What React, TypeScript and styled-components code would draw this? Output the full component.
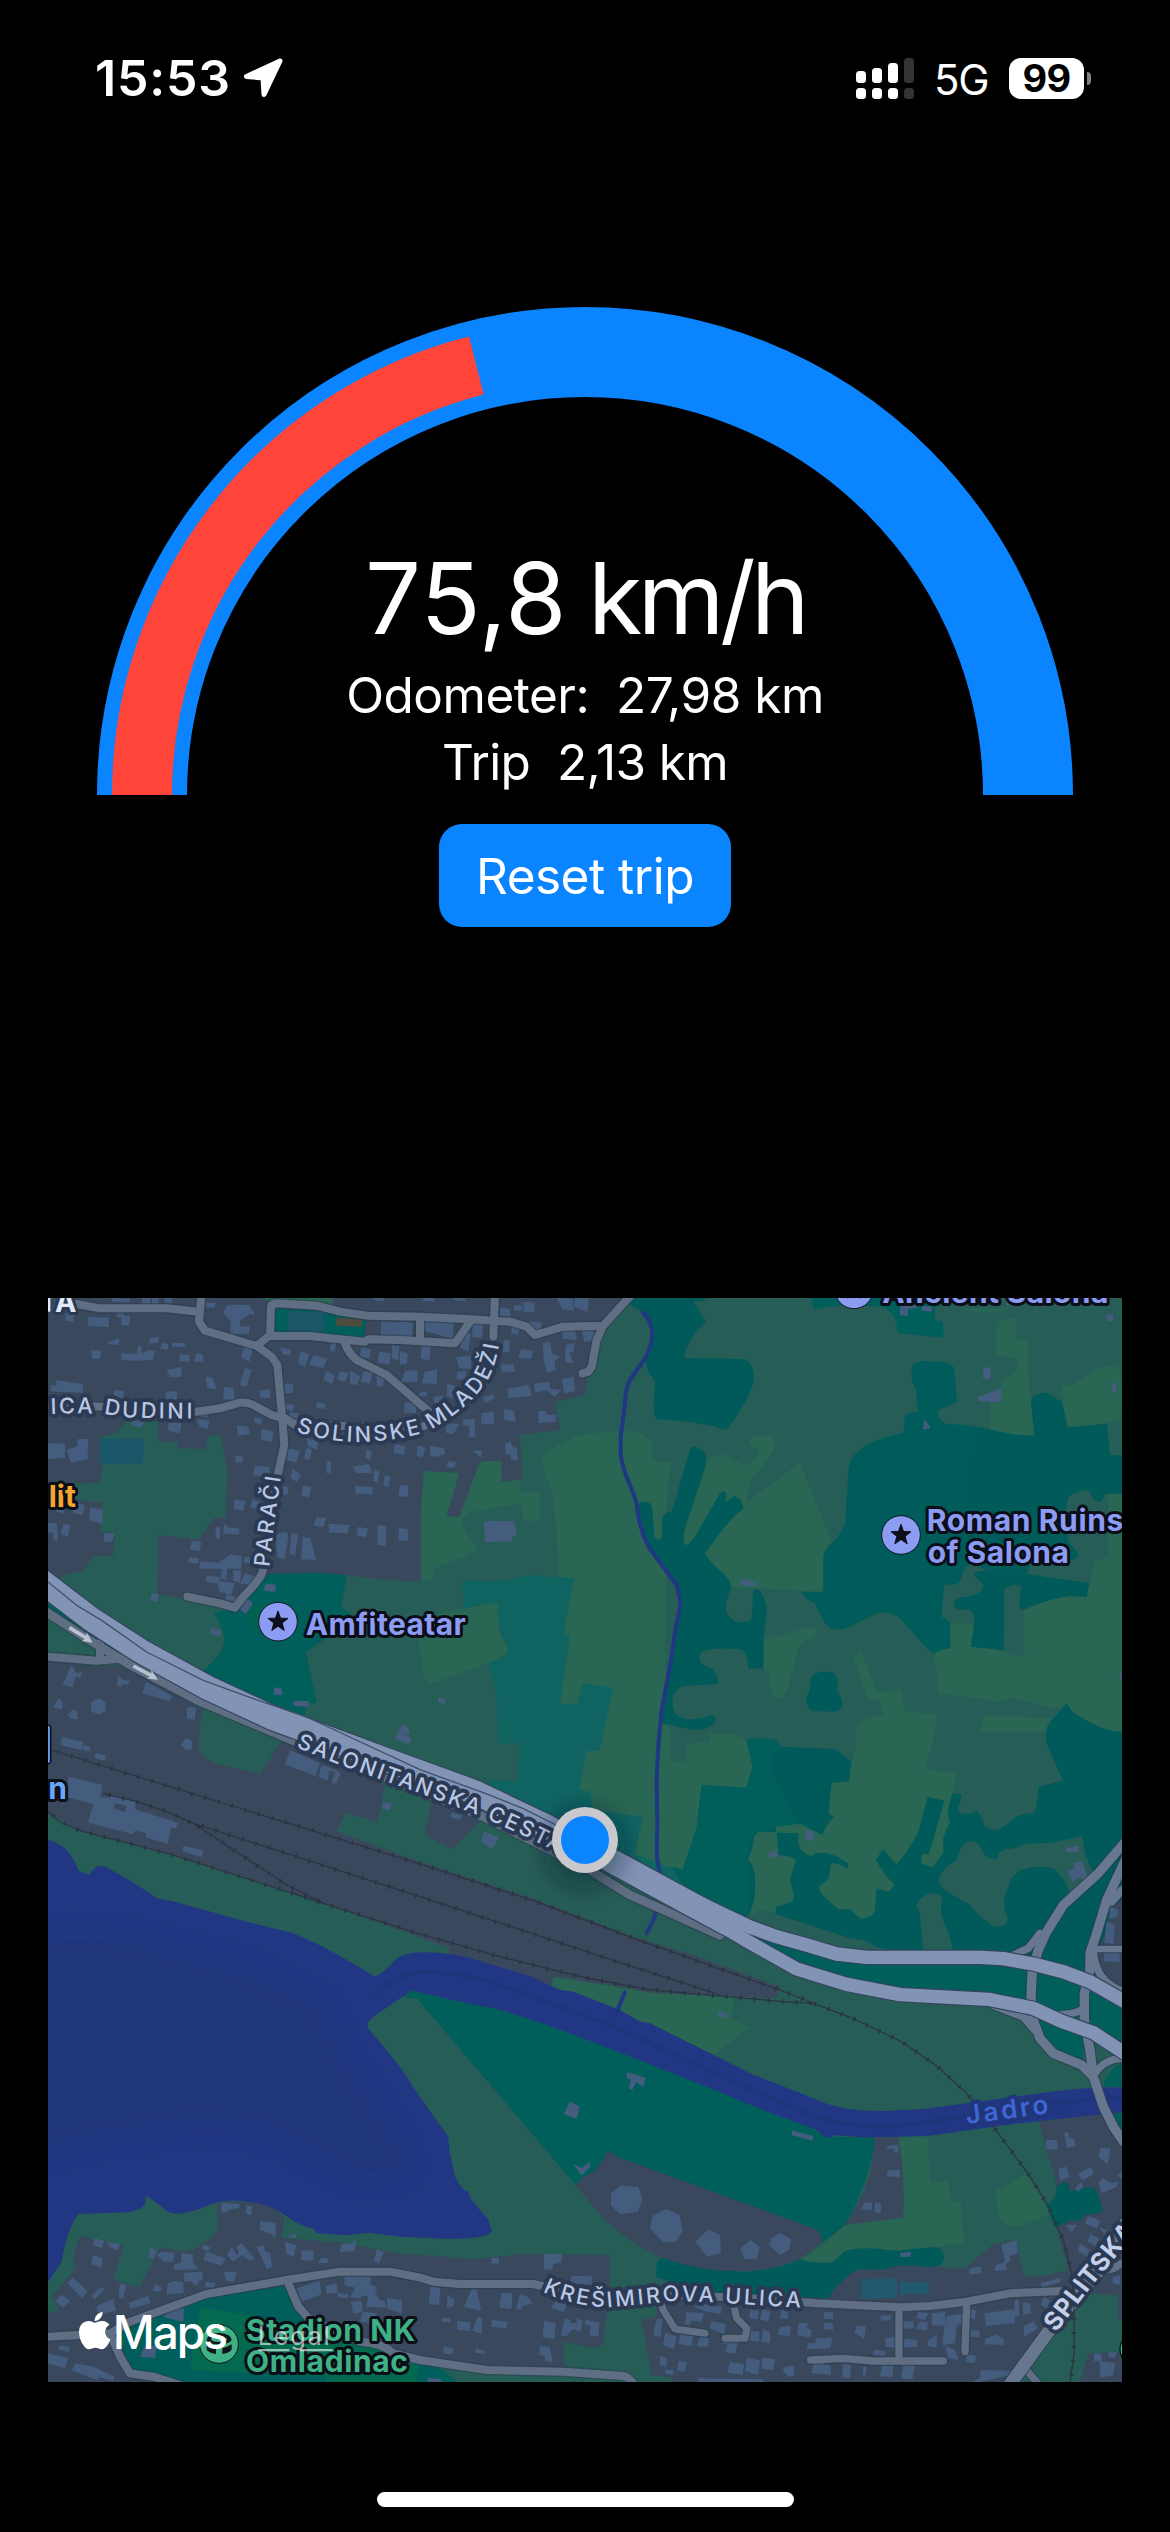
import React from 'react';
import styled, { createGlobalStyle } from 'styled-components';
import { FaApple } from 'react-icons/fa';

const GlobalStyle = createGlobalStyle`
  body { margin: 0; background: #000; }
  * { box-sizing: border-box; }
`;

const sans = `Inter, "Liberation Sans", sans-serif`;

const Screen = styled.main`
  width: 1170px;
  height: 2532px;
  overflow: hidden;
  background: #000;
  color: #fff;
  font-family: ${sans};
  display: flex;
  flex-direction: column;
  align-items: center;
`;

/* ---------- status bar ---------- */
const StatusBar = styled.header`
  width: 100%;
  height: 156px;
  padding: 0 79px 0 95px;
  display: flex;
  align-items: center;
  justify-content: space-between;
`;
const StatusGroup = styled.div`
  display: flex;
  align-items: center;
`;
const Clock = styled.span`
  font-size: 50px;
  font-weight: 600;
  line-height: 60px;
  letter-spacing: 0.8px;
  width: 148px;
  white-space: nowrap;
`;
const Signal = styled.div`
  display: grid;
  grid-template-columns: repeat(4, 10px);
  grid-template-rows: 25px 11px;
  gap: 5px 6px;
  align-items: end;
  margin-right: 20px;
`;
const SignalBar = styled.i<{ $h: number; $off?: boolean }>`
  display: block;
  height: ${(p) => p.$h}px;
  border-radius: 3.5px;
  background: ${(p) => (p.$off ? '#333' : '#fff')};
`;
const Network = styled.span`
  font-size: 42px;
  line-height: 50px;
  letter-spacing: -1.2px;
  width: 55px;
  margin-right: 20px;
  padding-top: 3px;
`;
const Battery = styled.div`
  display: flex;
  align-items: center;
  gap: 3px;
`;
const BatteryBody = styled.div`
  width: 75px;
  height: 41px;
  border-radius: 12px;
  background: #fff;
  color: #000;
  font-size: 38px;
  font-weight: 700;
  line-height: 41px;
  letter-spacing: -0.8px;
  text-align: center;
`;
const BatteryTip = styled.div`
  width: 4px;
  height: 13px;
  border-radius: 0 5px 5px 0;
  background: #808080;
`;

/* ---------- speedometer ---------- */
const Dial = styled.section`
  display: grid;
  width: 976px;
  height: 488px;
  margin-top: 151px;
  & > * { grid-area: 1 / 1; }
`;
const Readout = styled.div`
  align-self: end;
  justify-self: center;
  display: flex;
  flex-direction: column;
  align-items: center;
`;
const Speed = styled.div`
  font-size: 99px;
  line-height: 120px;
  letter-spacing: 0.4px;
  word-spacing: -7px;
  white-space: pre;
  margin-bottom: 4px;
`;
const Unit = styled.span`
  letter-spacing: -4.6px;
`;
const Metric = styled.div<{ $track: number }>`
  font-size: 49.5px;
  line-height: 66.5px;
  letter-spacing: ${(p) => p.$track}px;
  white-space: pre;
`;
const ResetButton = styled.button`
  margin: 29px 0 0;
  width: 292px;
  height: 103px;
  border: 0;
  border-radius: 23px;
  background: #0a84ff;
  color: #fff;
  font-family: ${sans};
  font-size: 49.5px;
  letter-spacing: -0.5px;
  padding: 0;
`;

/* ---------- map ---------- */
const MapFrame = styled.section`
  margin-top: 371px;
  width: 1074px;
  height: 1084px;
  overflow: hidden;
  & > svg { display: block; }
`;
const HomeIndicator = styled.div`
  margin-top: 110px;
  width: 417px;
  height: 15px;
  border-radius: 8px;
  background: #fff;
`;

const StreetText = styled.text<{ $size?: number; $weight?: number; $color?: string; $halo?: string }>`
  font-family: ${sans};
  font-size: ${(p) => p.$size ?? 65}px;
  font-weight: ${(p) => p.$weight ?? 500};
  fill: ${(p) => p.$color ?? '#b9c7e6'};
  stroke: ${(p) => p.$halo ?? '#2b3a52'};
  stroke-width: 24px;
  stroke-linejoin: round;
  paint-order: stroke;
`;
const PlaceText = styled.text<{ $color: string; $size?: number; $halo?: string }>`
  font-family: ${sans};
  font-size: ${(p) => p.$size ?? 90}px;
  font-weight: 700;
  fill: ${(p) => p.$color};
  stroke: ${(p) => p.$halo ?? '#0c0e17'};
  stroke-width: 18px;
  stroke-linejoin: round;
  paint-order: stroke;
`;
const BrandText = styled.text<{ $size: number; $alpha?: number; $weight?: number }>`
  font-family: ${sans};
  font-size: ${(p) => p.$size}px;
  font-weight: ${(p) => p.$weight ?? 400};
  fill: #fff;
  fill-opacity: ${(p) => p.$alpha ?? 1};
`;

const GREEN = '#275d57';
const LIGHT = '#296654';
const TEAL = '#005a5a';
const PARK = '#005e5b';
const GARDEN = '#0f6462';
const URBAN = '#39485c';
const WATER = '#213783';
const DEEP = '#1f3579';
const BLOCK = '#445d7e';
const ROAD = '#5f6e83';
const RAMP = '#67778f';
const HIGHWAY = '#8294b6';

type Sector = 'nw' | 'n' | 'ne' | 'w' | 'c' | 'e' | 'sw' | 's' | 'se';
const origin: Record<Sector, [number, number]> = {
  nw: [0, 0], n: [1080, 0], ne: [2130, 0],
  w: [0, 1080], c: [1080, 1080], e: [2130, 1080],
  sw: [0, 2160], s: [1080, 2160], se: [2130, 2160],
};
const At = ({ s, children }: { s: Sector; children: React.ReactNode }) => (
  <g transform={`translate(${origin[s][0]} ${origin[s][1]})`}>{children}</g>
);

type Area = [Sector, string, string];

const land: Area[] = [
  ['nw', URBAN, 'M24 0H1770L1680 120L1645 255L1633 315L1545 337L1560 420L1440 435L1445 567L1385 577L1383 512L1320 515L1258 680H1218L1258 549L1152 543L1143 660V870L1105 876L1000 865L920 855L830 848L685 852L600 950L570 955L430 925L352 912L354 736L478 748L520 685L557 681L562 540L543 438L505 436L498 477L415 475L410 457L354 453V392H262L225 430L183 440L186 525Q184 578 170 578L100 580L24 590Z'],
  ['nw', URBAN, 'M24 632L110 630L186 637L182 725L225 730L220 798H160L130 843Q90 845 65 862L24 880Z'],
  ['nw', LIGHT, 'M665 24H878V46L690 36Z'],
  ['nw', PARK, 'M705 55L835 62L980 88L972 143L700 125Z'],
  ['nw', '#1a5568', 'M745 63L852 66L850 128L742 122Z'],
  ['nw', '#4f4c3e', 'M890 83L966 88L964 111L888 107Z'],
  ['nw', '#1a5669', 'M178 445L311 447L309 522L178 520Z'],
  ['nw', PARK, 'M685 852L830 848L920 855L903 955Q930 960 935 990L798 1087L830 1238L805 1240L793 1275L700 1260L480 1150Q530 1110 545 1080Q555 1045 555 1045L545 1015L522 968L600 950Z'],
  ['nw', '#006150', 'M620 985Q630 930 700 935L780 960Q790 1030 730 1040Q640 1040 620 985Z'],
  ['nw', PARK, 'M24 935L330 1140L290 1140L24 965Z'],
  ['n', LIGHT, 'M72 543L178 549L138 680H178L240 515L303 512L305 577L360 569V608H418V690L372 696L360 640L210 667Q190 672 185 700L232 782L120 828Q98 838 98 868L63 870V660Z'],
  ['n', LIGHT, 'M425 493L530 437L610 425L690 422Q755 440 755 460V500Q758 513 770 513L812 515L800 640L795 1290L812 1312L815 1412L855 1417L862 1362L925 1355L930 1332Q1000 1325 1040 1350L1058 1440L1040 1493L905 1485L890 1615L848 1740L780 1750L680 1700L470 1590L490 1030L522 865L474 860L470 720L455 600Q430 550 425 493Z'],
  ['n', GARDEN, 'M186 870Q300 880 340 865Q400 850 450 860L522 865L490 1030L510 1035L480 1240L530 1245L548 1180L640 1193L598 1383H560L537 1498L573 1507L577 1565H625L728 1580L705 1693L830 1740L860 1790L780 1750L470 1590L260 1490L268 1470L352 1475L360 1358L295 1362L290 1230Q285 1170 265 1120L295 1100Q330 1080 322 1070Q285 1010 295 940Q270 935 193 957Z'],
  ['n', LIGHT, 'M120 970L193 957L270 940H295Q285 1010 322 1070Q330 1100 250 1125L100 1180Q75 1185 70 1150L55 1050Z'],
  ['n', TEAL, 'M680 24H920Q915 35 880 35L918 95Q860 150 852 204L1030 207Q1060 215 1062 265Q1055 320 980 420Q880 390 770 388Q755 375 765 290Q765 265 750 255L735 215L760 130L750 95L728 65L680 38Z'],
  ['n', LIGHT, 'M918 510Q950 490 980 495Q1020 525 1045 525Q1080 500 1075 480Q1045 465 1048 450Q1070 432 1110 435Q1130 440 1120 480Q1090 530 1050 575Q1040 600 1043 635L1200 518L1295 755Q1270 770 1272 800L1268 905L1140 898L995 893L915 790L850 790L840 700Z'],
  ['n', TEAL, 'M712 640Q755 625 757 660L763 740Q775 755 787 740V685Q790 668 815 665L850 545L870 480Q880 455 915 490Q925 510 910 550L860 700Q845 745 855 765Q870 765 885 740L960 610Q975 595 980 615L975 635L1005 618Q1030 630 1030 655Q985 690 915 790Q930 820 970 850Q990 870 995 893Q975 930 978 960Q985 990 1020 997Q1055 995 1055 980L1060 900Q1075 890 1085 910Q1105 950 1100 970L1090 1050L1092 1135L1045 1137Q1042 1085 1020 1078Q960 1072 920 1080Q890 1090 900 1115Q910 1128 935 1135Q960 1160 952 1182L850 1188Q815 1200 818 1250Q825 1290 880 1288Q930 1280 935 1275Q950 1280 948 1293Q930 1320 880 1320L785 1300L800 1200L830 980L840 940L825 885L740 770L715 690Z'],
  ['n', GREEN, 'M785 1300L812 1312L815 1412L855 1417L862 1362L925 1355L930 1325L880 1320Z'],
  ['n', LIGHT, 'M1092 1047L1230 1012Q1260 1020 1245 1040L1205 1055L1190 1090L1165 1195Q1140 1250 1115 1205L1105 1150L1090 1137Z'],
  ['ne', PARK, 'M183 24L192 60Q230 48 300 45L400 50Q435 75 437 90L445 130L582 143L578 95L555 90V24Z'],
  ['ne', LIGHT, 'M630 55Q700 80 790 55Z'],
  ['ne', LIGHT, 'M740 95L798 84V148L836 150V270L855 435Q800 440 720 418V340L753 338V270L790 255Q810 235 803 205L735 197Z'],
  ['ne', LIGHT, 'M933 290Q980 285 1020 250Q1070 220 1105 232Q1116 245 1116 350L1110 390L1075 400L953 413Z'],
  ['ne', '#005c5b', 'M485 235Q490 212 525 212L590 218Q615 225 615 250L621 335L590 350Q565 355 562 370Q575 400 590 403Q640 402 720 418Q800 440 853 437L843 330Q855 308 890 308L935 335L953 413L1070 401L1080 495H1116V614L1063 612L1055 635Q1030 640 1020 605Q1000 590 955 620L945 660L955 755L985 790Q985 810 960 810L850 800L830 853L1018 880L1010 920Q950 912 820 960Q800 955 815 890Q790 875 762 900V1000L760 1080L662 1070L672 1000Q675 960 655 958Q620 965 612 945Q610 925 640 922Q700 915 700 885Q690 865 672 855Q680 840 720 843L660 822Q635 835 633 870Q620 890 582 883L575 980L600 995L602 1075L570 1080L553 1092L530 1075L450 985Q410 955 370 975L310 1005Q250 1035 225 1000Q200 955 195 940Q160 925 155 905L215 907Q222 900 220 880V800Q225 780 245 760Q275 730 285 700L295 540Q300 500 330 480Q360 450 455 430Q465 420 463 385Q470 360 503 367L498 300L485 270Z'],
  ['ne', TEAL, 'M678 415Q780 440 853 437L843 330Q855 308 890 308L935 335L953 413L1070 401L1080 495H1116V614L1063 612L1055 635Q1030 640 1020 605Q1000 590 955 620L945 660V745H655V485H678Z'],
  ['ne', TEAL, 'M672 855Q680 840 720 843L830 853L1018 880L1010 920Q950 912 820 960Q800 955 815 890Q790 875 762 900V1000L760 1080L662 1070L672 1000Q675 960 655 958Q620 965 612 945Q610 925 640 922Q700 915 700 885Z'],
  ['ne', LIGHT, 'M1075 612H1116V1327Q1075 1330 1040 1310L965 1262L950 1240L930 1258L785 1222L745 1235L565 1208L553 1092Q560 1080 602 1076V1000L672 1003L662 1070L745 1080L790 1097L824 1098L820 960Q900 925 960 918L1010 922L1035 812L1075 800Z'],
  ['e', TEAL, 'M-10 270Q5 262 80 270L95 290L255 297L305 335L400 420L600 430Q640 430 635 440L623 480Q640 505 680 482Q695 495 705 530Q740 555 775 520Q800 490 850 490Q862 480 865 410L938 393L890 280Q880 240 910 205L950 160L970 190Q1070 250 1116 245V1208L1030 1148L930 1112L850 1075L715 1048L450 1034L290 1003L130 950L0 870L-60 800L-190 720L-235 650L-202 660L-160 535L-145 405L-10 413L8 350Z'],
  ['e', PARK, 'M0 835L170 885L350 922H690L850 942L1020 995L1116 1050V1208L930 1112L715 1048L450 1034L290 1003L130 950Z'],
  ['e', PARK, 'M-10 270Q5 262 80 270L95 290L62 315Q70 360 85 410L120 470Q130 510 150 525L78 530L20 545L-5 565V800L-190 720L-235 650L-202 660L-160 535L-145 405L-10 413L8 350Z'],
  ['e', GREEN, 'M-20 800L40 780L300 865L340 870Q380 895 420 900L350 910L180 880Z'],
  ['e', LIGHT, 'M307 18L332 3L385 130L452 118L465 183L562 193Q555 270 523 358L620 370L592 490L601 515L580 560V610L548 652L513 640L517 613H537L583 452L533 440L505 545Q490 580 440 645L400 597L378 628Q400 675 435 705L415 725L380 715L375 780Q370 805 330 806L300 778H265Q210 735 205 712L237 685L243 640Q270 640 290 657L297 642Q240 600 200 610L185 618Q150 610 145 580V550L78 548V530L150 521L217 555Q230 520 252 500L235 490L245 400L297 393L305 335L320 280L317 230Q330 210 402 192L385 150L357 155Z'],
  ['e', LIGHT, 'M-5 620Q10 600 12 560L25 545L80 547L85 615Q140 620 137 635Q120 680 120 695Q140 745 125 755L80 770L75 790L40 780L-5 800Q20 750 15 680Q10 640 -5 630Z'],
  ['e', GREEN, 'M567 690Q570 660 620 630Q630 580 660 573Q690 575 700 610Q715 630 740 627Q745 600 770 597Q790 600 830 580Q900 585 998 557Q1000 620 1030 665L960 725Q940 680 910 655Q870 645 820 657Q780 675 775 710Q750 760 773 800Q775 830 740 830Q710 825 660 765L600 730Q570 715 567 690Z'],
  ['e', GREEN, 'M498 765Q520 730 550 730Q575 735 577 745Q570 770 575 800Q605 860 606 900H520L510 790Z'],
  ['e', LIGHT, 'M700 195L905 205Q885 230 885 245H692Z'],
  ['e', TEAL, 'M185 80Q200 62 240 65Q262 68 262 90V125Q280 145 277 165Q275 187 245 185L190 183Q170 178 169 150Q170 135 178 125Z'],
  ['e', URBAN, 'M1116 750L1085 770L1065 850L1038 920Q1050 985 1116 1035Z'],
  ['w', URBAN, 'M24 30L170 50L250 45L490 180Q475 230 477 300Q490 330 540 345L662 372L722 275L780 290L1035 405L1012 518L918 487L890 545L1140 635L1480 745L1780 860L1960 915L2220 1010L2210 1045L1840 1030L1760 1015L1540 980L1535 1005L1380 960L1230 925L1225 895L1080 840L850 760L400 615L125 545L24 485Z'],
  ['c', URBAN, 'M95 450L75 555L157 598L240 515Z'],
  ['c', LIGHT, 'M462 980L760 1030L1005 1040L990 1105L1050 1130L940 1215L720 1110L490 1020L455 1005Z'],
  ['w', WATER, 'M24 570Q60 580 80 600Q105 630 115 662L148 675Q170 635 205 655Q280 695 350 745Q380 750 410 757L620 815L760 850Q870 895 1000 978Q1020 980 1060 935Q1090 905 1160 907Q1250 910 1310 930L1470 978L1560 1020L1600 1025L1740 1080L1800 1115L1830 1120L2010 1210L2130 1270L2320 1345Q2400 1385 2530 1383L2650 1377L2780 1360L3000 1330Q3140 1308 3246 1312V1387L3110 1402L2980 1415L2860 1430L2670 1457L2475 1463L2385 1455Q2360 1470 2345 1455L2330 1440L2230 1405L2130 1365L1720 1200L1520 1125L1380 1080L1280 1060L1115 1022L1085 1042L1000 1100Q975 1120 985 1135L1010 1165L1080 1250L1140 1342L1225 1460Q1228 1500 1230 1510L1245 1580Q1265 1620 1285 1625L1295 1650L1345 1710L1355 1740Q1360 1765 1230 1767L1080 1760L985 1748L920 1756L830 1750L820 1735Q780 1730 720 1685Q620 1640 540 1655L500 1668Q400 1710 370 1675L325 1640H318L315 1665Q290 1690 220 1688L115 1692Q80 1740 65 1835L24 1895Z'],
  ['w', PARK, 'M1092 1042L1115 1022L1280 1060L1380 1080L1520 1125L1720 1200L2000 1310L2130 1365L2330 1440Q2350 1470 2375 1460L2502 1463V1490Q2480 1600 2430 1700L2415 1725L2345 1780L1607 1605L1160 1080L1130 1045Z'],
  ['s', URBAN, 'M527 525Q545 500 580 485Q615 450 623 417Q635 435 660 443L1240 655Q1270 670 1265 695Q1255 710 1200 745Q1100 790 980 785Q860 780 780 742Q690 695 620 635Z'],
  ['s', TEAL, 'M770 760Q780 745 790 745Q900 785 1040 785Q1130 780 1200 747Q1260 765 1300 755Q1320 720 1380 714Q1450 715 1500 722L1590 708Q1630 710 1632 740Q1630 770 1600 772L1500 768Q1450 785 1370 778L1310 830Q1290 845 1290 865L900 850L768 800Z'],
  ['se', LIGHT, 'M445 382H532L540 518L595 513L603 578L632 573L642 698L560 710L480 718Q420 725 380 715Q300 712 280 725Q260 755 230 758Q170 758 150 747Q200 725 285 645L460 623Z'],
  ['se', LIGHT, 'M735 545L830 490L900 610Q850 640 795 650Q750 645 745 610Z'],
  ['se', URBAN, 'M372 382H445Q465 480 460 623L285 645Q375 520 372 382Z'],
  ['se', URBAN, 'M865 335L980 322L1116 307V930H1104V855L1040 853L990 840L965 830L950 760L900 590Q920 575 920 550L915 500Z'],
  ['se', TEAL, 'M890 585Q920 570 920 530Q940 510 955 520L960 543L990 540Q1030 520 1045 550L1057 600Q1050 615 1010 612L985 635L965 628L915 655Z'],
  ['se', URBAN, 'M240 865Q240 840 310 785Q340 775 400 780Q450 760 520 770L645 775L728 703L798 690L822 797Q860 808 950 780L965 830L890 960L830 1085L780 1116H-235L-237 1102L-295 1095L-325 930L-280 918V850Z'],
  ['se', PARK, 'M1060 230Q1070 180 1116 160V230ZM1070 320L1116 305V390Z'],
  ['se', PARK, 'M860 5L1000 60V165L910 130Q870 90 860 5Z'],
  ['se', URBAN, 'M1015 1030L1116 1025V1116H990Z'],
  ['sw', URBAN, 'M118 678L250 706L220 810L298 832L360 712L430 725Q470 720 480 705L520 680Q545 640 528 590L545 575Q650 570 700 595L733 620L725 683L900 698L1080 730L1300 747L1450 732L1710 735V890L1697 930L1690 1000Q1680 1018 1640 1010L1570 995L1575 1085L1300 1070L1080 1050V1116H24V910L58 900L35 860L110 770L98 750Z'],
  ['sw', GREEN, 'M1080 1060L1575 1085L1780 1116H1080Z'],
  ['sw', PARK, 'M270 945L500 860L735 828Q770 900 850 950L1000 1020L1140 1060L1210 1080L1250 1116H420L280 1080L215 960Z'],
  ['sw', '#036a4f', 'M480 890L620 915L900 960L1135 1060L1130 1116H860V1100L450 1080Z'],
];

const buildings: [Sector, string][] = [
  ['nw', 'M75 70L102 73L100 95L77 92ZM145 80L207 83L206 111L144 108ZM230 60L252 62L251 84L230 82ZM243 75L270 78L268 108L244 105ZM305 24H330V42L306 40ZM335 24H357L355 45L336 42ZM372 24H398L396 40L374 38ZM215 24L270 26L268 38L216 34ZM498 37L527 39L525 54L499 52ZM562 44L628 45L646 74L630 72L600 92L601 110L628 108L627 131L573 134L571 94L549 68ZM205 155L238 145L236 166L202 162ZM330 143L356 141L354 160L327 159ZM365 158L386 163L382 180L361 175ZM396 158L437 160L436 171L397 170ZM153 180L184 182L180 207L157 206ZM244 190L290 192L293 168L306 170L304 190L327 180L345 183L338 210L288 212L244 210ZM418 192L449 195L448 216L418 214ZM468 190L489 193L490 216L463 215ZM380 240L422 231L426 260L390 262ZM613 170L638 175L628 215L603 200ZM614 234L634 240L620 290L599 285ZM496 260L518 264L530 298L502 295ZM552 290L580 294L585 330L550 328ZM660 302L692 297L690 325L658 322ZM733 280L760 282L758 310L734 309ZM50 270L62 273L130 283L128 309L31 304L33 286L48 287ZM222 300L251 303L250 325L222 322ZM378 305L411 303L410 330L376 326ZM718 171L753 180L749 196L728 192ZM782 184L808 193L795 230L774 220ZM820 195L862 206L850 234L807 224ZM875 150L890 158L883 187L869 180ZM963 172L993 177L989 206L960 200ZM1018 185L1050 190V222L1012 218ZM1056 165L1078 168L1075 212L1055 205ZM900 244L926 250L915 276L891 268ZM858 243L886 258L875 283L850 268ZM930 240L962 260L950 285L930 282ZM970 243L1000 245L990 280L963 276ZM1010 250L1033 262L1028 292L1010 288ZM1100 243L1132 245L1128 277L1085 274ZM1024 94L1119 100L1115 143L1022 136ZM1000 24H1032V34L1000 30ZM276 390L314 393L305 412L276 408ZM470 388L509 392L502 418L480 412ZM480 366L505 369L503 382L480 380ZM385 398L425 400L420 430L385 422ZM590 405L625 410L629 432L594 437ZM665 417L700 424L697 455L662 450ZM643 382L666 386L662 403L645 398ZM750 365L776 370L772 390L748 386ZM728 340L764 345L758 362L725 358ZM832 335L858 343L853 358L828 352ZM745 475L781 482L768 517L738 510ZM800 472L818 480L806 512L792 505ZM800 443L835 455L830 480L803 468ZM860 513L873 516L872 553L859 548ZM937 530L985 522L998 548L950 550ZM1003 540L1018 545L1012 580L1000 572ZM1034 555L1051 560L1045 592L1030 586ZM978 478L995 482L992 510L977 505ZM1063 463L1094 468L1090 493L1061 489ZM945 587L999 592L998 613L946 611ZM1080 586L1106 590L1102 621L1075 617ZM757 537L782 553L772 575L752 565ZM790 585L814 592L806 623L783 616ZM24 459L76 461L75 503L24 507ZM80 480L112 468L113 448L144 446L143 508L92 518ZM645 527L690 532L688 562L639 555ZM587 495L611 501L606 519L585 515ZM728 588L746 592L742 616L727 612ZM583 627L616 634L610 663L581 656ZM637 627L660 635L650 658L631 650ZM830 680L859 685L849 712L820 706ZM865 701L928 705L923 730L868 728ZM955 710L985 716L978 742L949 736ZM1012 706L1039 708L1037 767L1012 765ZM1077 714L1103 718V753L1075 750ZM24 698L50 700L54 752L40 750L38 728L24 727ZM70 701L91 706L84 740L62 733ZM48 640L80 645L70 670L50 665ZM102 638L134 645L128 674L98 668ZM150 652L188 660V702L148 690ZM193 729L225 731L215 757L191 754ZM528 711L540 712V747L526 744ZM552 702L566 712L599 716L596 734L549 730ZM455 752L484 756L479 784L450 779ZM448 802L477 805L474 820L444 818ZM482 814L535 818L574 793L606 798L603 836L478 836ZM545 830L562 832L558 870L543 866ZM500 856L540 862L535 880L498 876ZM580 840L605 842L600 878L578 872ZM613 800L640 803L635 822L612 818ZM615 850L648 860L640 885L600 880ZM532 872L584 880L574 914L538 905ZM335 909L357 913L352 936L330 932ZM677 881L708 884L706 906L670 902ZM560 912L593 925L588 936L555 930ZM617 918L639 942L617 972L594 955ZM512 1013L545 1022L538 1039L510 1031ZM705 732L740 725L745 740L735 806L712 803ZM755 728L774 734L765 797L748 790ZM788 741L812 745L828 810L783 808Z'],
  ['n', 'M0 95L38 98L36 143L0 138ZM70 86L162 92L158 147L68 120ZM215 98L250 103L245 145L218 140ZM302 52L330 58L333 83L299 78ZM370 36L405 38L403 67L370 65ZM342 45L368 48L366 63L342 60ZM68 24H102V35L70 32ZM160 24H196V34L160 30ZM470 24L518 26L522 62L487 58ZM525 24H567L562 66L522 50ZM388 94L426 98L420 128L390 120ZM335 108L357 112L355 134L333 130ZM487 118L525 120L530 150L488 146ZM545 120L583 118L585 152L553 156ZM66 165L92 168L88 211L62 206ZM0 184L23 190L21 222L0 224ZM185 125L212 130L205 185L182 175ZM168 200L215 198L213 237L178 235ZM312 150L330 152L327 188L308 185ZM363 177L400 183L393 206L355 204ZM428 158L450 156L456 190L479 200L463 215L468 243L440 246L431 210ZM497 165L524 158L520 185L508 188L520 220L495 216ZM303 224L340 222L345 245L305 248ZM15 243L52 240L53 276L4 275ZM75 245L112 238L110 282L65 280ZM142 282L165 286L158 325L140 318ZM170 245L198 243L197 270L171 268ZM322 297L388 284L395 318L325 325ZM402 281L448 275L450 296L483 300L465 320L440 300L405 308ZM486 266L520 261L526 303L492 310ZM250 322L280 312L283 326L255 338ZM100 322L130 316L126 340L102 338ZM15 335L48 340V370L12 368ZM58 308L84 304L80 318L56 318ZM245 370L280 365L283 403L243 401ZM312 356L342 362L347 395L313 390ZM415 364L437 362L440 374L467 373V396L415 399ZM190 388L224 387L225 441L207 440L208 408L188 405ZM140 400L178 402L160 433L138 428ZM52 465L76 474L68 503L50 498ZM90 468L133 475L135 493L110 500L90 498ZM315 460L333 456L337 470L350 475L354 512L333 508L330 495L317 493ZM217 483L246 480L243 503ZM145 513L172 517L160 535L138 530ZM0 468L14 472L12 494L0 492ZM0 585L26 588L22 620L0 618ZM0 716L23 718V753L0 751ZM252 693L342 694L351 736L338 740L336 754L256 756ZM1024 864L1071 880V887L1020 886Z'],
  ['ne', 'M450 45L500 45L500 54L474 56L473 77L451 76ZM515 48L546 50V65L514 62ZM770 28L785 30V47L768 45ZM1068 72L1091 74L1088 94L1072 92ZM700 234L722 231V266H699ZM684 322L753 294V338L685 333ZM1083 280L1095 275L1099 307L1090 311ZM523 387L542 414L519 419Z'],
  ['w', 'M95 45L108 68L128 68L120 83L108 80L98 112L68 104ZM235 78L250 90L272 92L262 105L247 103L245 112L230 105ZM318 95L396 138L388 154L307 130ZM55 145L70 158L65 178L40 173ZM98 178L113 186V208L95 207L82 195ZM175 145L197 157V182L175 195L153 182V157ZM442 171L468 173L464 209L440 205ZM438 265L456 272V298L440 300L423 285ZM703 112L725 115L728 135L702 134ZM760 153H806V171L762 168ZM1090 222L1110 240L1105 255L1075 245ZM1075 243L1115 265L1108 284L1067 268ZM1030 456L1056 460L1048 481L1026 476ZM66 262L130 276L124 301L63 286ZM130 285L152 292L148 304L127 298ZM167 308L198 317L193 332L163 324ZM85 380L188 405L180 440L205 443L207 433L287 452L285 478L414 518L408 535L393 533L383 581L316 562L318 549L285 542L280 553L144 518L160 463L80 440ZM430 587L490 601L487 620L428 605ZM750 300L840 340L826 378L735 343ZM845 345L860 350L885 360L902 370L888 402L875 398L885 365L868 362L862 392L835 380Z'],
  ['c', 'M117 141L138 150L132 162L113 156ZM252 545L297 562L278 598L243 575ZM155 488L187 495L180 510L150 502ZM1108 605L1131 602L1133 623L1106 620ZM955 1086L980 1089V1103L953 1100Z'],
  ['e', 'M168 538L195 545L186 573L165 571ZM948 594L984 587L987 605L949 608ZM970 640L997 632L1013 685L1003 694L993 680L968 697L952 662L975 655ZM1080 770L1104 778L1102 800L1078 806ZM1070 815L1095 825L1090 882L1063 878ZM1063 906L1110 908L1108 937L1061 933ZM1108 65H1116V87L1110 86Z'],
  ['sw', 'M165 685L192 692L187 715L158 706ZM200 695L240 703L234 720L210 712ZM158 735L188 745L185 774L154 763ZM330 712L350 722L340 748L326 742ZM350 735L365 725L404 728L400 756L372 755ZM424 730L458 732V755L476 778L402 780L404 762L423 758ZM545 577L599 583L597 594L568 598L557 608L543 603ZM620 585L637 588L633 616L617 613ZM660 633L707 638V684L693 672L660 660ZM740 680L770 668L767 684ZM492 703L513 714L503 724L484 715ZM500 725L556 745L545 767L490 750ZM575 710L590 735L597 728L588 708L605 700L643 745L632 752L605 735L580 755L560 735ZM650 712L670 705L676 725L690 728L697 770L680 777ZM735 695L768 705L762 740L738 732ZM785 720L822 722L820 753L783 749ZM845 743L865 745L862 760L833 758ZM903 702L937 700L940 690L948 694L945 724L900 727ZM1010 718L1032 726L1016 762L1003 752ZM98 803L142 842L128 865L82 820ZM185 830L193 838L165 868L153 857ZM240 820L261 825L248 866L235 862ZM266 878L325 857L332 880L270 896ZM65 853L90 873L70 893L47 875ZM170 888L220 867L228 902L195 910L172 905ZM345 823L365 830L360 847L337 842ZM385 820L405 812L430 818L431 848L378 854ZM432 788L488 785L487 810L475 813L474 825L460 823L456 815L433 813ZM497 815L527 818L524 833L494 830ZM550 786L592 785L580 815L560 813ZM770 835L838 812L845 853L785 875ZM857 827L890 820L892 848L860 852ZM893 850L925 853L922 865L892 862ZM914 798L993 802L990 835L980 840L960 865L930 862L945 833L913 825ZM995 825L1012 832L1005 850L1020 870L1035 873L1038 893L978 890L985 860L965 855ZM932 875L965 873L967 905L940 912ZM1042 863L1085 870V912L1040 895ZM967 905L1010 910L1005 940L960 935ZM395 893L432 895L430 935L405 930L370 920ZM318 1000L350 1010L345 1045L300 1040ZM60 1005L90 1012L86 1026L55 1018ZM24 1030L84 1045L75 1075L24 1060ZM105 1060L160 1070L224 1100L220 1113L175 1100L172 1110L96 1080Z'],
  ['s', 'M510 275L540 290L530 326L491 312ZM682 186L737 204L730 231L708 216L697 240L687 235L692 207L679 203ZM519 462L545 474L568 456L571 470L545 496ZM662 525L715 532L728 567L713 605L662 613L633 587V550ZM800 597L838 615L849 662L828 695L790 698L751 656L757 618ZM925 658L960 675L963 730L920 740L886 695ZM1052 690L1079 712L1070 748L1033 747L1021 716ZM1141 668L1173 688L1168 720L1140 735L1107 705L1115 685ZM275 743L297 745V762L273 760ZM432 732H486L484 758L459 762L458 780L432 778ZM514 797L575 799L576 824L512 820ZM92 830L121 833L117 885L86 882ZM143 855L165 870L158 890L140 895ZM215 838L228 835L243 895L240 902L192 890ZM305 848L338 850L334 897L298 893ZM360 855L378 858L400 878L365 890L362 900L348 897ZM470 868L500 878L492 907L452 893ZM127 923L153 925V937L126 935ZM172 933L210 936V963L171 960ZM233 920L246 925L245 973L217 962ZM276 930L323 935L320 955L274 950ZM432 933L467 938L463 987L428 982ZM493 926L510 930L512 940L530 938L531 925L548 933L543 965L517 958L500 978H483ZM557 930L599 938L595 980L568 975L572 948L554 943ZM132 1010L161 1015L155 1034L130 1028ZM228 1015L257 1022L253 1032L225 1028ZM418 1008L449 1010L458 1055L436 1053L433 1038L418 1034ZM0 870L6 872L4 905L0 903ZM85 1103L125 1108V1116H80ZM880 890L900 880L966 890L962 912L920 905ZM860 906L912 910L905 935L872 932L870 945L855 943ZM770 928L788 925L782 982L760 975ZM797 968L830 980L822 1018L788 1005ZM840 973L880 978L875 1008L837 1002ZM900 980L926 984L925 1012L890 1008ZM935 933L978 943L972 973L928 955ZM985 985L1015 990L1005 1032L975 1025L983 1005L965 1000ZM780 1037L801 1045L798 1070L778 1065ZM835 1053L862 1056L853 1086L832 1082ZM797 1078L822 1082L818 1095L795 1090ZM990 1055L1032 1063L1028 1095L981 1088ZM1040 1045L1080 1050L1075 1093L1035 1083ZM1085 1045L1125 1047L1120 1080L1086 1076ZM1050 900L1075 902V920L1048 917ZM1088 898L1110 905L1105 932L1080 925ZM1050 962L1078 965V994L1046 992ZM1090 960L1110 970V1000L1085 993ZM893 1105L1090 1108V1116H895Z'],
  ['se', 'M126 361L190 378L187 392L124 375ZM413 407L445 405L446 428L433 425L430 416L411 418ZM413 480H450V501L411 499ZM343 577L366 578L365 600L334 598ZM375 577L393 579L392 609L375 607ZM888 389L922 390L923 419L888 417ZM943 370L955 366L957 383L972 386L977 408L950 414ZM1050 415L1082 415L1073 464L1046 441ZM925 475L948 470L960 502L930 511ZM985 490L1023 470L1031 493L997 512ZM1045 520L1060 503L1080 520L1105 515L1100 530L1055 550ZM1102 495L1116 483V508ZM975 535L992 516L1000 528L985 545ZM1015 618L1052 633L1040 655L1005 640ZM947 645H981L965 667ZM1020 672L1048 685L1035 708L1013 695ZM990 700L1018 720L1010 740L984 722ZM1045 650L1070 660L1065 675ZM754 703L800 691L803 730L780 737V755L768 760L770 780L735 783L737 765L765 757ZM660 775L693 770L695 790L657 793ZM872 820L930 803L933 815L875 833ZM1090 800L1110 797L1112 825L1087 820ZM452 728L483 726L482 740L450 741ZM703 910L793 898L795 870L806 868L807 918L795 920V940L708 948ZM818 877L840 880L843 910L820 915ZM820 948L852 933L864 955L823 980ZM880 860L900 870L890 895L872 885ZM223 906H249V928L222 927ZM223 938H249V960L222 957ZM90 950L122 948L120 978L83 974ZM145 940L175 938L170 955L186 960L180 983L142 975ZM320 945L348 950L343 987L313 968ZM173 1000H195L197 985L248 983L240 1015L170 1018ZM390 918L425 915L422 930L393 932ZM374 1018L408 1025L400 1038L368 1033ZM407 983L438 982V1013L406 1010ZM457 935L490 933L491 955L455 957ZM505 906L536 910L525 930L498 925ZM510 933L534 938L530 962L498 956ZM545 910L585 905V948L545 945ZM590 918L648 910L640 940L620 945L615 1000L577 1005L583 950ZM535 990L560 975V1013L533 1008ZM465 985L500 990L502 1010L458 1013ZM660 898L678 900L675 928L655 924ZM663 960L690 963L688 982L662 980ZM586 1008L615 1020L625 1050L595 1045ZM650 1033L678 1038L674 1060L647 1055ZM705 987L738 974L762 988L760 1005L704 1003ZM692 1080L783 1082L780 1095L690 1116H668L690 1103ZM280 1063L303 1065L300 1103L276 1102ZM193 1053L243 1068V1095L184 1088ZM340 1068L350 1070L345 1102L338 1098ZM396 1065L430 1068L427 1102L390 1098ZM460 1063L495 1066L487 1108L453 1105ZM105 1070L132 1068V1098L116 1100L97 1083ZM0 1045L28 1058L22 1093L0 1090ZM40 1043L74 1048L68 1080L34 1075ZM0 945L8 955L0 965ZM40 957L61 968L55 1000L34 993ZM0 905L25 907L22 928L0 925ZM38 900L60 905L55 934L30 928ZM95 900L115 907L112 928L90 924ZM1050 1053L1095 1060L1090 1095L1050 1103ZM1032 1030L1055 1033L1053 1055L1031 1052ZM1075 1027H1100L1095 1043L1075 1040Z'],
];

const streets: [Sector, string, number?][] = [
  ['nw', 'M110 42L180 55H380L475 65'],
  ['nw', 'M485 10L477 95L495 122L650 168L695 200L712 225L728 400L733 465L712 560L690 700L668 845Q660 870 610 920L585 953L540 940L442 920'],
  ['nw', 'M650 168L690 135L693 50Q695 40 710 40L830 47L900 65L980 77L1140 80L1290 88L1410 95L1460 110L1485 135L1570 110L1690 107L1755 35L1780 10'],
  ['nw', 'M690 138H810L900 148L975 155L985 148L1080 150L1245 160L1290 95'],
  ['nw', 'M1140 80V150'],
  ['n', 'M285 10L280 140'],
  ['n', 'M-165 160Q-155 190 -130 210L-40 255L70 350L110 385L70 410L-60 415L-310 400'],
  ['n', 'M608 110L590 150L575 230L565 245L548 250'],
  ['nw', 'M24 345L190 350L300 365L470 365L540 355L600 338Q620 335 640 345L695 375L735 385L765 405'],
  ['w', 'M24 20L170 32L260 25'],
  ['w', 'M180 30V-20'],
  ['w', 'M10 -120L140 -35L270 45L470 150L760 272L1330 500L1640 655L1770 735L2040 856', 26],
  ['sw', 'M24 980L210 970L270 935L500 852L740 810L900 785H1050L1140 803L1180 815L1260 822H1480L1560 840L1750 865L1900 855L2130 865L2330 880L2580 892L2670 888L2780 875L2910 850L3070 843'],
  ['sw', 'M743 815L775 890L810 930L960 995Q1030 1000 1060 1030L1140 1050L1340 1080L1570 1085L1750 1098Q1765 1100 1780 1120'],
  ['sw', 'M210 970L240 1040L270 1090L340 1100L420 1125'],
  ['s', 'M783 880L790 900L825 957L915 970', 21],
  ['s', 'M1000 880L1010 925L1040 955L1035 985H975', 21],
  ['se', 'M447 895V1045', 22],
  ['se', 'M182 1050L280 1045L370 1053H580', 22],
  ['se', 'M650 880L645 1025', 22],
  ['se', 'M1040 785L1090 775L1116 760', 24],
  ['se', 'M820 1070L860 1116', 22],
];

const ramps: [Sector, string, number?][] = [
  ['e', 'M870 850L835 895L790 915', 22],
  ['e', 'M1020 897H1126', 20],
  ['e', 'M1030 900Q1035 980 1090 1010L1130 1030', 22],
  ['e', 'M1116 720L1085 755', 24],
  ['e', 'M1000 1075Q980 1095 900 1095', 22],
  ['e', 'M730 1065L820 1100L855 1140', 24],
  ['e', 'M1126 575L1045 670L940 765L890 845L865 900L847 960L843 1040L850 1110L870 1165L910 1210L995 1245L1030 1280L1060 1370L1090 1430L1120 1475', 28],
  ['e', 'M1126 630L1070 750L1040 850L1020 910V960L1003 1030V1110L1020 1200L1030 1280', 28],
  ['se', 'M1035 190Q1065 145 1120 145', 22],
  ['se', 'M775 1130L895 965L1040 790L1126 640', 38],
];

const rails = [
  'M35 300L1140 642L1480 752L1790 868L2220 1020L2320 1060L2430 1102L2470 1120L2585 1175L2690 1248L2780 1330L2860 1430L2960 1565L3020 1660L3070 1770L3095 1870L3102 1980V2110L3090 2200',
  'M190 430L290 455L380 485L460 520L1140 740L1640 905L2040 1035',
  'M460 520L740 705L850 760',
  'M24 485L60 515L120 542L400 615L850 760L1140 852L1380 920L1620 980L1820 1018L2000 1035L2220 1054L2320 1060',
];

const trunk = 'M0 870L24 888L150 985L300 1082L500 1192L700 1285L1080 1425L1300 1505L1520 1610L1710 1710L1870 1797L1960 1846L2062 1900';
const carriageways = [
  'M1985 1842L2080 1887L2130 1911L2210 1940L2300 1965L2390 1992L2480 2002H2820L2890 2006L2980 2022L3070 2045L3150 2075L3260 2138',
  'M1985 1876L2080 1928L2130 1958L2270 2037L2420 2083L2580 2114L2845 2128L2980 2155L3060 2192L3160 2228L3270 2300',
];

const StarPin = ({ x, y }: { x: number; y: number }) => (
  <g transform={`translate(${x} ${y})`}>
    <circle r="58" fill="#8c9cf3" stroke="#101420" strokeWidth="3" />
    <path
      fill="#0d101b"
      stroke="#0d101b"
      strokeWidth="3"
      strokeLinejoin="round"
      d="M0 -32L7.6 -10.5L30 -9.8L12.4 4L18.6 26.5L0 13.5L-18.6 26.5L-12.4 4L-30 -9.8L-7.6 -10.5Z"
    />
  </g>
);

const CurvedLabel = ({ id, d, length, size, weight, color, halo, children }: {
  id: string; d: string; length: number; size?: number; weight?: number; color?: string; halo?: string; children: string;
}) => (
  <>
    <path id={id} d={d} fill="none" />
    <StreetText $size={size} $weight={weight} $color={color} $halo={halo} textLength={length}>
      <textPath href={`#${id}`} textLength={length}>{children}</textPath>
    </StreetText>
  </>
);

const PlaceMap = () => (
  <svg width="1074" height="1084" viewBox="24 24 3222 3252">
    <defs>
      <filter id="soft" x="-20%" y="-20%" width="140%" height="140%"><feGaussianBlur stdDeviation="34" /></filter>
    </defs>
    <rect x="0" y="0" width="3300" height="3300" fill={GREEN} />
    {land.map(([s, fill, d], i) => <At s={s} key={i}><path d={d} fill={fill} /></At>)}
    <At s="w">
      <path d="M-90 860L200 850L600 950L850 1060L900 1200L1080 1480L1100 1570L960 1590L700 1450L500 1420L150 1470L-90 1540Z" fill={DEEP} fillOpacity=".85" filter="url(#soft)" />
      <path d="M1000 1035Q1080 965 1150 965Q1300 970 1420 1020L1700 1120L2130 1317L2300 1390Q2400 1430 2550 1430L2780 1400L3000 1365L3246 1342" fill="none" stroke={DEEP} strokeWidth="12" />
    </At>
    <At s="n">
      <g fill="none" stroke={WATER} strokeWidth="12" strokeLinecap="round">
        <path d="M728 68Q755 90 757 130Q755 170 735 205L690 270Q675 300 675 340L662 440V490Q665 530 690 585Q710 630 712 660Q720 720 745 770L830 885L842 940Q835 980 826 1020L815 1100L785 1260Q772 1380 770 1480L772 1600L770 1680Q772 1730 785 1765" />
        <path d="M770 1855L762 1885L740 1930M675 2107L655 2155" />
      </g>
      <path d="M655 2155L635 2205" stroke={DEEP} strokeWidth="10" />
    </At>
    <g fill={BLOCK}>{buildings.map(([s, d]) => <At s={s} key={s}><path d={d} /></At>)}</g>
    <At s="w"><path d="M228 460L260 468L255 487L221 475Z" fill={URBAN} /></At>
    <At s="se"><path d="M333 808L441 805V863L335 866ZM450 816L537 815V851L449 852Z" fill="#21596e" /></At>

    <g fill="none" strokeLinecap="round" strokeLinejoin="round">
      {streets.map(([s, d, w], i) => <At s={s} key={i}><path d={d} stroke="#2c3a4b" strokeOpacity=".55" strokeWidth={(w ?? 24) + 8} /></At>)}
      {streets.map(([s, d, w], i) => <At s={s} key={i}><path d={d} stroke={ROAD} strokeWidth={w ?? 24} /></At>)}
      {ramps.map(([s, d, w], i) => <At s={s} key={i}><path d={d} stroke="#2c3a4b" strokeOpacity=".6" strokeWidth={(w ?? 24) + 7} /></At>)}
      {ramps.map(([s, d, w], i) => <At s={s} key={i}><path d={d} stroke={RAMP} strokeWidth={w ?? 24} /></At>)}
    </g>
    <At s="w">
      <g fill="none" stroke="#2b333f">
        {rails.map((d) => (
          <g key={d}>
            <path d={d} strokeWidth="3.5" />
            <path d={d} strokeWidth="14" strokeDasharray="5 37" strokeDashoffset="-18" />
          </g>
        ))}
      </g>
    </At>
    <g fill="none" strokeLinejoin="round">
      {carriageways.map((d) => <path key={d} d={d} stroke="#35445c" strokeWidth="47" />)}
      <path d={trunk} stroke="#35445c" strokeWidth="79" />
      {carriageways.map((d) => <path key={d} d={d} stroke={HIGHWAY} strokeWidth="40" />)}
      <path d={trunk} stroke={HIGHWAY} strokeWidth="72" />
      <path d="M24 880L110 950L185 995L320 1090L490 1175L640 1230L800 1285L1140 1443L1330 1512L1450 1560L1560 1615" stroke="#405069" strokeWidth="4" transform="translate(0 -4)" />
    </g>
    <g fill="none" stroke="#b9c2d3" strokeWidth="11">
      <path d="M88 1013L146 1048M280 1128L340 1160" />
      <path d="M158 1058L140 1027L138 1045L125 1053ZM354 1170L334 1140L334 1158L320 1165Z" fill="#b9c2d3" stroke="none" />
    </g>

    <At s="nw">
      <CurvedLabel id="dudini" d="M32 372L100 370L190 371L250 381L330 385L500 386" length={426}>{'ICA DUDINI'}</CurvedLabel>
      <CurvedLabel id="mladezi" d="M768 425Q860 455 960 456Q1080 452 1160 425Q1260 375 1330 290Q1375 230 1383 110" length={752}>{'SOLINSKE MLADEŽI'}</CurvedLabel>
      <CurvedLabel id="paraci" d="M688 832L700 720L724 550" length={273}>{'PARAČI'}</CurvedLabel>
      <StarPin x={714} y={995} />
      <PlaceText $color="#8c9cf3" x="797" y="1035" textLength="480">Amfiteatar</PlaceText>
      <PlaceText $color="#dfe9fa" $size={86} $halo="#2b3a52" x="45" y="65">A</PlaceText>
      <path d="M24 20H31V65H24Z" fill="#dfe9fa" />
      <PlaceText $color="#f3a52e" x="26" y="650" textLength="82">lit</PlaceText>
    </At>
    <At s="ne">
      <StarPin x={312} y={-2} />
      <PlaceText $color="#8c9cf3" x="397" y="39" textLength="678">Ancient Salona</PlaceText>
      <StarPin x={453} y={735} />
      <PlaceText $color="#8c9cf3" x="530" y="723" textLength="590">Roman Ruins</PlaceText>
      <PlaceText $color="#8c9cf3" x="533" y="819" textLength="424">of Salona</PlaceText>
    </At>
    <At s="w">
      <CurvedLabel id="salonitanska" d="M768 292L900 345L1140 430L1320 498L1440 552L1600 630" length={850}>{'SALONITANSKA CESTA'}</CurvedLabel>
      <rect x="-20" y="224" width="52" height="118" rx="10" fill="#68a6f8" stroke="#0c0e17" strokeWidth="5" />
      <rect x="-20" y="234" width="46" height="98" rx="6" fill="#5b98ec" />
      <PlaceText $color="#68a6f8" x="25" y="447">n</PlaceText>
    </At>
    <At s="s">
      <CurvedLabel id="kresimirova" d="M428 845Q520 890 630 892Q740 882 820 873L940 877L1100 887L1250 895" length={782}>{'KREŠIMIROVA ULICA'}</CurvedLabel>
    </At>
    <At s="se">
      <CurvedLabel id="jadro" d="M650 342L760 328L920 306" length={250} size={78} weight={600} color="#3f66d2" halo="#20357a">Jadro</CurvedLabel>
      <CurvedLabel id="splitska" d="M918 968L1020 835L1180 640" length={390} size={76} weight={700} color="#c4d0ea">SPLITSKA</CurvedLabel>
      <circle cx="1160" cy="1018" r="50" fill="#43b88a" stroke="#0c0e17" strokeWidth="4" />
    </At>

    <At s="sw">
      <circle cx="537" cy="1002" r="58" fill="#3fb186" stroke="#0f1a1c" strokeWidth="3" />
      <g fill="#0f171b">
        <path d="M500 990Q500 972 537 968Q575 972 575 990Q570 1002 537 1003Q503 1002 500 990Z" />
        <path d="M500 1003Q512 1012 528 1013V1032Q502 1028 500 1018ZM575 1003Q562 1012 547 1013V1032Q573 1028 575 1018Z" />
      </g>
      <ellipse cx="537" cy="988" rx="24" ry="8" fill="#3fb186" />
      <PlaceText $color="#3fb186" x="618" y="993" textLength="508">Stadion NK</PlaceText>
      <PlaceText $color="#3fb186" x="618" y="1087" textLength="486">Omladinac</PlaceText>
      <BrandText $size={76} $alpha={0.6} x="653" y="1006" textLength="216">Legal</BrandText>
      <path d="M655 1017H748V1024H655ZM780 1017H878V1024H780Z" fill="#fff" fillOpacity=".6" />
      <FaApple x={100} y={898} size={128} color="#fff" />
      <BrandText $size={138} $weight={500} x="218" y="1018" textLength="346">Maps</BrandText>
    </At>

    <At s="c">
      <circle cx="555" cy="595" r="120" fill="#0a1820" fillOpacity=".4" filter="url(#soft)" />
      <circle cx="555" cy="570" r="99" fill="#c8c8cd" />
      <circle cx="555" cy="570" r="72" fill="#0a84ff" />
    </At>
  </svg>
);

const speed = 75.8;
const maxSpeed = 180;

const Gauge = () => {
  const a = (Math.PI * speed) / maxSpeed;
  const x = 488 - 443 * Math.cos(a);
  const y = 488 - 443 * Math.sin(a);
  return (
    <svg width="976" height="488" viewBox="0 0 976 488" fill="none">
      <path d="M45 488A443 443 0 0 1 931 488" stroke="#0a84ff" strokeWidth="90" />
      <path d={`M45 488A443 443 0 0 1 ${x} ${y}`} stroke="#ff453a" strokeWidth="60" />
    </svg>
  );
};

export default function App() {
  return (
    <Screen>
      <GlobalStyle />
      <StatusBar>
        <StatusGroup>
          <Clock>15:53</Clock>
          <svg width="40" height="40" viewBox="0 0 40 40">
            <path d="M37 3L3.5 18.5L20 20L21 36.5Z" fill="#fff" stroke="#fff" strokeWidth="5" strokeLinejoin="round" />
          </svg>
        </StatusGroup>
        <StatusGroup>
          <Signal>
            <SignalBar $h={12} />
            <SignalBar $h={15} />
            <SignalBar $h={20} />
            <SignalBar $h={25} $off />
            <SignalBar $h={11} />
            <SignalBar $h={11} />
            <SignalBar $h={11} />
            <SignalBar $h={11} $off />
          </Signal>
          <Network>5G</Network>
          <Battery>
            <BatteryBody>99</BatteryBody>
            <BatteryTip />
          </Battery>
        </StatusGroup>
      </StatusBar>
      <Dial>
        <Gauge />
        <Readout>
          <Speed>75,8 <Unit>km/h</Unit></Speed>
          <Metric $track={-0.5}>{'Odometer:  27,98 km'}</Metric>
          <Metric $track={-0.6}>{'Trip  2,13 km'}</Metric>
        </Readout>
      </Dial>
      <ResetButton>Reset trip</ResetButton>
      <MapFrame>
        <PlaceMap />
      </MapFrame>
      <HomeIndicator />
    </Screen>
  );
}
